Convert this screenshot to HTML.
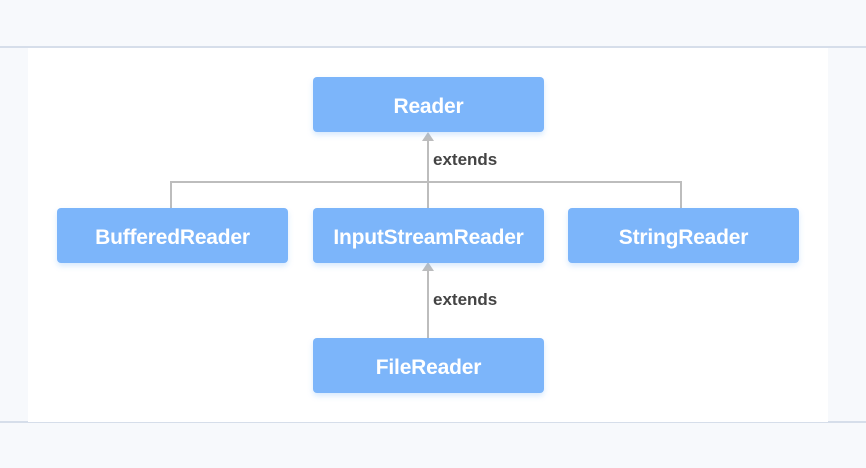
<!DOCTYPE html><html><head><style>
body{margin:0;width:866px;height:468px;background:#f7f9fc;position:relative;overflow:hidden;font-family:"Liberation Sans",sans-serif}
.l{position:absolute;left:0;width:866px;height:2px;background:#d6deea}
.p{position:absolute;left:28px;top:48px;width:800px;height:374px;background:#fff}
.b{position:absolute;width:231px;height:55px;box-sizing:border-box;padding-top:4px;background:#7cb5fa;border-radius:4px;color:#fff;font-size:21px;font-weight:bold;letter-spacing:-0.2px;display:flex;align-items:center;justify-content:center;box-shadow:0 3px 6px rgba(124,181,250,.3)}
.t{position:absolute;font-size:17px;font-weight:bold;color:#444}
</style></head><body>
<div class="l" style="top:46px"></div><div class="l" style="top:421px"></div>
<div class="p"></div>
<svg style="position:absolute;left:0;top:0" width="866" height="468">
<g stroke="#bdbdbd" stroke-width="2" fill="none">
<path d="M171 208V182H681V208"/><path d="M428 208V136"/><path d="M428 338V266"/></g>
<path d="M422 141L428 132L434 141Z" fill="#bdbdbd"/><path d="M422 271L428 262L434 271Z" fill="#bdbdbd"/>
</svg>
<div class="b" style="left:313px;top:77px">Reader</div>
<div class="b" style="left:57px;top:208px">BufferedReader</div>
<div class="b" style="left:313px;top:208px">InputStreamReader</div>
<div class="b" style="left:568px;top:208px">StringReader</div>
<div class="b" style="left:313px;top:338px">FileReader</div>
<div class="t" style="left:433px;top:150px">extends</div>
<div class="t" style="left:433px;top:290px">extends</div>
</body></html>
